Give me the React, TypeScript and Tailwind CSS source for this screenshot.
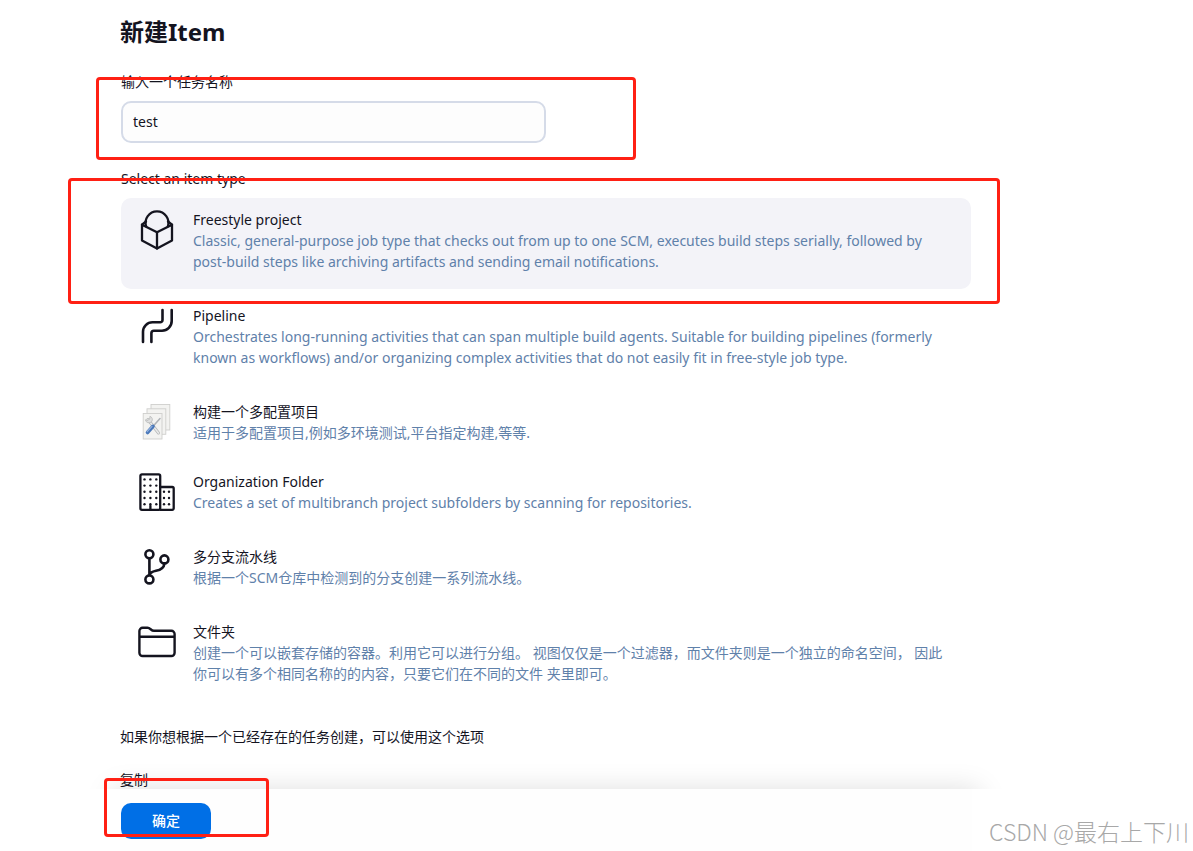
import React, { useState } from "react";
import clsx from "clsx";

type ItemType = {
  id: string;
  name: string;
  description: string;
  icon: React.ReactNode;
  compact?: boolean;
};

const FreestyleIcon = () => (
  <svg viewBox="0 0 40 40" className="size-10" fill="none" stroke="currentColor" strokeWidth="2.3" strokeLinejoin="round" strokeLinecap="round" aria-hidden="true">
    <path d="M9.2 16.5A11.4 11.4 0 1 1 30.8 16.5" />
    <path d="M5 14.7L20 22.3L35 14.7V30.5L20 38.5L5 30.5Z" />
    <path d="M20 22.3V38.5M5 14.7L9 11.5M35 14.7L31 11.5" />
  </svg>
);

const PipelineIcon = () => (
  <svg viewBox="0 0 40 40" className="size-10" fill="none" stroke="currentColor" strokeWidth="2.6" strokeLinecap="round" aria-hidden="true">
    <path d="M25.5 4V14a2.3 2.3 0 0 1-2.3 2.3H15.5A9.5 9.5 0 0 0 6 25.8V36" />
    <path d="M14.4 36V27.2a2.5 2.5 0 0 1 2.5-2.5H25a9.7 9.7 0 0 0 9.7-9.7V4" />
  </svg>
);

const MatrixIcon = () => (
  <svg viewBox="0 0 40 40" className="size-10" aria-hidden="true">
    <g fill="#f3f3f1" stroke="#cfcfcd" strokeWidth="0.9">
      <rect x="14" y="2.5" width="18.8" height="25.5" />
      <rect x="10" y="6.8" width="18.8" height="25.5" />
      <rect x="6.2" y="11.5" width="18.8" height="25.5" />
    </g>
    <path d="M11 17.5L21.5 31" stroke="#b4b6b6" strokeWidth="3" strokeLinecap="round" />
    <path d="M11 17.5L21.5 31" stroke="#e9eaea" strokeWidth="1.6" strokeLinecap="round" />
    <path d="M8.3 17.8a3.7 3.7 0 0 0 6.4 1.8a3.4 3.4 0 0 0-1.8-5.3l-.2 2.8l-2.2 1.3z" fill="#dfe0e0" stroke="#b4b6b6" strokeWidth="0.7" />
    <path d="M15 25.5L23 16.5" stroke="#aeb2b6" strokeWidth="1.5" strokeLinecap="round" />
    <path d="M10.5 30.5L16 24.3" stroke="#4a78ba" strokeWidth="3.6" strokeLinecap="round" />
    <path d="M10.2 29.6L15 24.4" stroke="#94b2de" strokeWidth="1.2" strokeLinecap="round" />
  </svg>
);

const OrganizationIcon = () => (
  <svg viewBox="0 0 40 40" className="size-10" fill="none" stroke="currentColor" strokeWidth="2.3" strokeLinejoin="round" strokeLinecap="round" aria-hidden="true">
    <rect x="3.4" y="2.4" width="19.8" height="35.4" rx="1.5" />
    <path d="M23.2 15H35.2a1.5 1.5 0 0 1 1.5 1.5V36.3a1.5 1.5 0 0 1-1.5 1.5H23.2M13.4 34V37.8" />
    <g fill="currentColor" stroke="none">
      {[7.4, 13.6, 19.8, 26, 32.2].map((y) =>
        [7.5, 13.4, 19.3].map((x) => <circle key={`${x}-${y}`} cx={x} cy={y} r="1.2" />)
      )}
      {[19.8, 26, 32.2].map((y) =>
        [27, 32].map((x) => <circle key={`${x}-${y}`} cx={x} cy={y} r="1.2" />)
      )}
    </g>
  </svg>
);

const BranchIcon = () => (
  <svg viewBox="0 0 40 40" className="size-10" fill="none" stroke="currentColor" strokeWidth="2.6" strokeLinecap="round" aria-hidden="true">
    <circle cx="12.4" cy="7.3" r="4" />
    <circle cx="12.4" cy="32.4" r="4" />
    <circle cx="27.4" cy="12.4" r="4" />
    <path d="M12.4 11.4V28.4C12.8 25.8 15 24.6 19 23.8C24 22.8 27 21 27.4 16.6" />
  </svg>
);

const FolderIcon = () => (
  <svg viewBox="0 0 40 40" className="size-10" fill="none" stroke="currentColor" strokeWidth="2.4" strokeLinejoin="round" aria-hidden="true">
    <path d="M2.4 14.8V9a3.2 3.2 0 0 1 3.2-3.2H10.5C13.5 5.8 13.8 8.8 17 8.8H34.4A3.2 3.2 0 0 1 37.6 12V30.8A3.2 3.2 0 0 1 34.4 34H5.6A3.2 3.2 0 0 1 2.4 30.8ZM2.4 14.8H37.6" />
  </svg>
);

const ITEM_TYPES: ItemType[] = [
  {
    id: "freestyle",
    name: "Freestyle project",
    description:
      "Classic, general-purpose job type that checks out from up to one SCM, executes build steps serially, followed by post-build steps like archiving artifacts and sending email notifications.",
    icon: <FreestyleIcon />,
  },
  {
    id: "pipeline",
    name: "Pipeline",
    description:
      "Orchestrates long-running activities that can span multiple build agents. Suitable for building pipelines (formerly known as workflows) and/or organizing complex activities that do not easily fit in free-style job type.",
    icon: <PipelineIcon />,
  },
  {
    id: "matrix",
    name: "构建一个多配置项目",
    description: "适用于多配置项目,例如多环境测试,平台指定构建,等等.",
    icon: <MatrixIcon />,
    compact: true,
  },
  {
    id: "organization",
    name: "Organization Folder",
    description: "Creates a set of multibranch project subfolders by scanning for repositories.",
    icon: <OrganizationIcon />,
  },
  {
    id: "multibranch",
    name: "多分支流水线",
    description: "根据一个SCM仓库中检测到的分支创建一系列流水线。",
    icon: <BranchIcon />,
  },
  {
    id: "folder",
    name: "文件夹",
    description:
      "创建一个可以嵌套存储的容器。利用它可以进行分组。 视图仅仅是一个过滤器，而文件夹则是一个独立的命名空间， 因此你可以有多个相同名称的的内容，只要它们在不同的文件 夹里即可。",
    icon: <FolderIcon />,
  },
];

// Red outline drawn over a step of the form
const Highlight = ({ className }: { className: string }) => (
  <div className={clsx("pointer-events-none absolute z-20 rounded-sm border-3 border-[#ff2014]", className)} />
);

const App: React.FC = () => {
  const [name, setName] = useState("test");
  const [selected, setSelected] = useState("freestyle");

  return (
    <div className="relative min-h-screen bg-white pl-[120px] pr-6 font-['Noto_Sans','Noto_Sans_CJK_SC',sans-serif] text-sm leading-[21px] text-[#14141f]">
      <form className="max-w-[852px]" onSubmit={(e) => e.preventDefault()}>
        <h1 className="pt-4 text-2xl font-bold">新建Item</h1>

        <div className="relative mt-[23px] px-px">
          <label htmlFor="name" className="block">输入一个任务名称</label>
          <input
            id="name"
            type="text"
            value={name}
            onChange={(e) => setName(e.target.value)}
            className="mt-[9px] block h-[42px] w-1/2 rounded-[10px] border-2 border-[#d5dbe8] bg-[#fdfdfd] px-2.5 pb-0.5 outline-none"
          />
          <Highlight className="-left-6 top-1.5 h-[83px] w-[540px]" />
        </div>

        <fieldset className="mt-[25px]">
          <legend className="px-px">Select an item type</legend>
          <div className="mx-px mt-[9px]">
            {ITEM_TYPES.map((item) => (
              <label
                key={item.id}
                className={clsx(
                  "relative flex gap-4 rounded-[10px] px-4 pt-[11px] pb-[17px]",
                  selected === item.id && "bg-[#f3f3f8]",
                  !item.compact && "mb-[5px]"
                )}
              >
                <input
                  type="radio"
                  name="mode"
                  value={item.id}
                  checked={selected === item.id}
                  onChange={() => setSelected(item.id)}
                  className="sr-only"
                />
                <span className="mt-px shrink-0">{item.icon}</span>
                <span className="min-w-0">
                  <span className="block">{item.name}</span>
                  <span className="block text-[#5f81aa]">{item.description}</span>
                </span>
                {item.id === "freestyle" && <Highlight className="-left-[53px] -right-[29px] -top-5 -bottom-[15px]" />}
              </label>
            ))}
          </div>
        </fieldset>

        <p className="mt-5">如果你想根据一个已经存在的任务创建，可以使用这个选项</p>
        <p className="mt-[22px]">复制</p>

        <div className="sticky bottom-0 -mt-px bg-[#fefefe] px-px pt-[14px] pb-3">
          <div className="pointer-events-none absolute -inset-x-8 bottom-full h-7 overflow-hidden">
            <div className="mx-6 mt-7 h-10 shadow-[0_0_28px_rgba(0,0,0,0.13)]" />
          </div>
          <button type="submit" className="block h-9 rounded-[10px] bg-[#006fe6] px-[31px] pb-0.5 font-medium text-white">
            确定
          </button>
          <Highlight className="-left-4 -top-[11px] h-[59px] w-[165px]" />
        </div>
      </form>

      <div className="absolute right-1 bottom-1 font-['Noto_Sans_CJK_SC',sans-serif] text-[23px] leading-8 font-light text-[#a8a8a8]">
        CSDN @最右上下川
      </div>
    </div>
  );
};

export default App;
